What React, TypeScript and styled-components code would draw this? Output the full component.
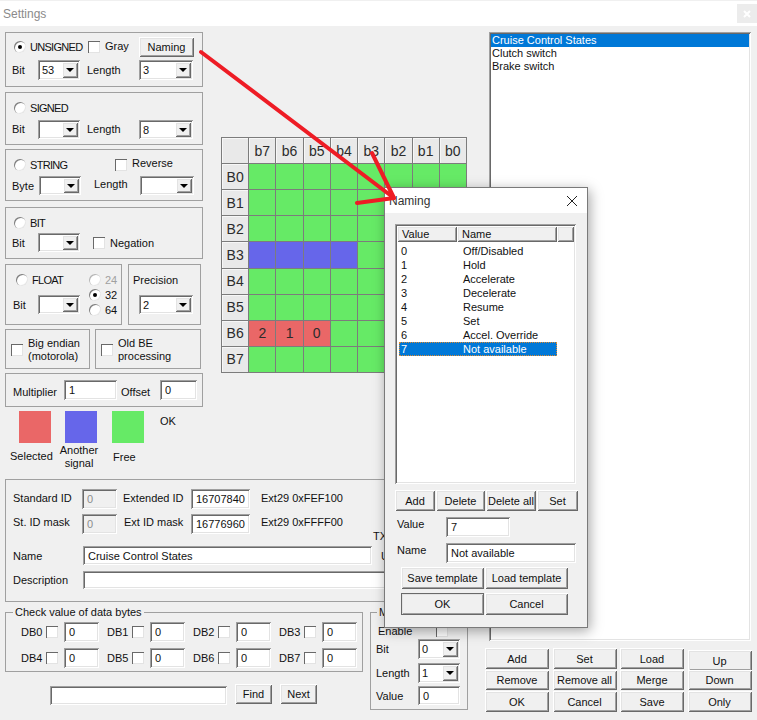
import React from 'react'
import styled, { createGlobalStyle, css } from 'styled-components'

const raised = css`
  box-shadow: inset 1px 1px 0 #ffffff, inset -1px -1px 0 #696969, inset 2px 2px 0 #e3e3e3,
    inset -2px -2px 0 #a0a0a0;
`

const sunken = css`
  box-shadow: inset 1px 1px 0 #a0a0a0, inset -1px -1px 0 #ffffff, inset 2px 2px 0 #696969,
    inset -2px -2px 0 #e3e3e3;
`

const GlobalStyle = createGlobalStyle`
  html, body { margin: 0; padding: 0; background: #f0f0f0; }
  * { box-sizing: border-box; }
  body { font-family: "Liberation Sans", Arial, sans-serif; font-size: 11px; color: #111; }
`

const Page = styled.div`
  position: relative;
  width: 757px;
  height: 720px;
  overflow: hidden;
  background: #f0f0f0;
`

const TitleBar = styled.div`
  height: 26px;
  display: flex;
  align-items: center;
  justify-content: space-between;
  background: #fff;
  border-top: 1px solid #f0f0f0;
  padding-left: 3px;
  font-size: 12px;
  color: #8a8a8a;
`

const CloseBox = styled.div`
  width: 20px;
  height: 19px;
  display: flex;
  align-items: center;
  justify-content: center;
  background: #ececec;
`

const Body = styled.div`
  display: flex;
  padding: 6px 5px 0;
`

const LeftArea = styled.div`
  width: 475px;
  display: flex;
  flex-direction: column;
`

const TopSection = styled.div`
  height: 447px;
  display: flex;
`

const LeftColumn = styled.div`
  width: 198px;
  display: flex;
  flex-direction: column;
`

const Panel = styled.div<{ $h: number; $w?: number; $mb?: number; $pt?: number; $pl?: number; $row?: boolean }>`
  height: ${p => p.$h}px;
  width: ${p => (p.$w ? `${p.$w}px` : '100%')};
  margin-bottom: ${p => p.$mb ?? 0}px;
  padding: ${p => p.$pt ?? 4}px 0 0 ${p => p.$pl ?? 6}px;
  border: 1px solid #a0a0a0;
  display: flex;
  flex-direction: ${p => (p.$row ? 'row' : 'column')};
  flex: none;
`

const PanelRow = styled.div<{ $mb?: number; $gap?: number }>`
  display: flex;
  margin-bottom: ${p => p.$mb ?? 0}px;
  gap: ${p => p.$gap ?? 0}px;
`

const Line = styled.div<{ $mb?: number; $h?: number }>`
  display: flex;
  align-items: center;
  height: ${p => p.$h ?? 20}px;
  margin-bottom: ${p => p.$mb ?? 0}px;
  flex: none;
`

const Label = styled.span<{ $w?: number; $ml?: number; $up?: number; $top?: number; $off?: boolean; $tight?: boolean }>`
  display: inline-block;
  flex: none;
  white-space: nowrap;
  width: ${p => (p.$w ? `${p.$w}px` : 'auto')};
  margin-left: ${p => p.$ml ?? 0}px;
  margin-bottom: ${p => p.$up ?? 0}px;
  margin-top: ${p => p.$top ?? 0}px;
  letter-spacing: ${p => (p.$tight ? '-0.7px' : 'normal')};
  color: ${p => (p.$off ? '#a0a0a0' : 'inherit')};
`

const RadioMark = styled.span<{ $on?: boolean; $ml?: number; $off?: boolean }>`
  width: 12px;
  height: 12px;
  flex: none;
  margin-left: ${p => p.$ml ?? 0}px;
  margin-right: 4px;
  border-radius: 50%;
  background: #fff;
  box-shadow: inset 1px 1px 0 ${p => (p.$off ? '#b4b4b4' : '#7d7d7d')}, inset -1px -1px 0 #e6e6e6;
  display: flex;
  align-items: center;
  justify-content: center;
  &::after {
    content: '';
    display: ${p => (p.$on ? 'block' : 'none')};
    width: 4px;
    height: 4px;
    border-radius: 50%;
    background: #000;
  }
`

const CheckMark = styled.span<{ $ml?: number; $mr?: number }>`
  width: 12px;
  height: 12px;
  flex: none;
  margin-left: ${p => p.$ml ?? 0}px;
  margin-right: ${p => p.$mr ?? 5}px;
  background: #fff;
  box-shadow: inset 1px 1px 0 #696969, inset -1px -1px 0 #e3e3e3;
`

const Button = styled.button<{ $w?: number; $h?: number; $ml?: number; $mt?: number; $strong?: boolean }>`
  width: ${p => (p.$w ? `${p.$w}px` : '100%')};
  height: ${p => p.$h ?? 21}px;
  margin-left: ${p => p.$ml ?? 0}px;
  margin-top: ${p => p.$mt ?? 0}px;
  flex: none;
  padding: 0;
  border: none;
  background: #f0f0f0;
  font: inherit;
  color: #111;
  ${raised}
  ${p =>
    p.$strong &&
    css`
      outline: 1px solid #696969;
      outline-offset: -1px;
    `}
`

const TextInput = styled.input<{ $w: number; $h?: number; $ml?: number; $off?: boolean; $mt?: number }>`
  width: ${p => p.$w}px;
  height: ${p => p.$h ?? 20}px;
  margin: ${p => p.$mt ?? 0}px 0 0 ${p => p.$ml ?? 0}px;
  flex: none;
  padding: 0 2px 0 5px;
  border: none;
  outline: none;
  font: inherit;
  color: ${p => (p.$off ? '#8c8c8c' : '#111')};
  background: ${p => (p.$off ? '#f0f0f0' : '#fff')};
  ${sunken}
`

const SelectBox = styled.div<{ $w: number; $h: number; $ml: number }>`
  width: ${p => p.$w}px;
  height: ${p => p.$h}px;
  margin-left: ${p => p.$ml}px;
  flex: none;
  display: flex;
  align-items: center;
  justify-content: space-between;
  padding: 2px 2px 2px 4px;
  background: #fff;
  ${sunken}
`

const SelectArrow = styled.span`
  width: 16px;
  height: 100%;
  flex: none;
  background: #f0f0f0;
  display: flex;
  align-items: center;
  justify-content: center;
  ${raised}
  &::after {
    content: '';
    border-style: solid;
    border-width: 4px 4px 0;
    border-color: #000 transparent transparent;
  }
`

const Dropdown: React.FC<{ w?: number; h?: number; ml?: number; value?: string }> = ({
  w = 42,
  h = 20,
  ml = 0,
  value = '',
}) => (
  <SelectBox $w={w} $h={h} $ml={ml}>
    <span>{value}</span>
    <SelectArrow />
  </SelectBox>
)

const Stacked = styled.div`
  display: flex;
  flex-direction: column;
`

const PrecisionTitle = styled.div`
  margin-bottom: 8px;
  height: 13px;
  line-height: 13px;
`

const TwoLines = styled.div`
  line-height: 13px;
`

const Legend = styled.div`
  display: flex;
  margin-top: 4px;
`

const LegendItem = styled.div<{ $w: number }>`
  width: ${p => p.$w}px;
  flex: none;
  display: flex;
  flex-direction: column;
`

const Swatch = styled.div<{ $color: string; $ml: number }>`
  width: 32px;
  height: 32px;
  margin-left: ${p => p.$ml}px;
  background: ${p => p.$color};
`

const Caption = styled.div<{ $ml: number; $mt: number; $w?: number }>`
  margin-left: ${p => p.$ml}px;
  margin-top: ${p => p.$mt}px;
  width: ${p => (p.$w ? `${p.$w}px` : 'auto')};
  line-height: 13px;
  text-align: center;
  white-space: nowrap;
`

const LegendOk = styled.div`
  margin-top: 4px;
`

const BitGrid = styled.div`
  width: 246px;
  height: 236px;
  margin: 105px 0 0 18px;
  flex: none;
  display: grid;
  grid-template-columns: repeat(9, 1fr);
  grid-template-rows: repeat(9, 1fr);
  gap: 1px;
  padding: 1px;
  background: #7c7c7c;
`

const HeadCell = styled.div`
  display: flex;
  align-items: center;
  justify-content: center;
  background: #e9e9e9;
  box-shadow: inset 1px 1px 0 #f7f7f7;
  font-size: 14px;
  color: #2c2c2c;
`

const BitCell = styled.div<{ $color: string }>`
  display: flex;
  align-items: center;
  justify-content: center;
  background: ${p => p.$color};
  font-size: 14px;
  color: #2c2c2c;
`

const IdPanel = styled.div`
  height: 123px;
  padding: 9px 0 0 7px;
  border: 1px solid #a0a0a0;
`

const TxLabel = styled.span`
  align-self: flex-end;
  margin: 0 0 -8px 30px;
`

const LowerRow = styled.div`
  display: flex;
  margin-top: 4px;
  gap: 7px;
`

const Fieldset = styled.fieldset<{ $w: number; $h: number; $pl: number; $pt: number }>`
  width: ${p => p.$w}px;
  height: ${p => p.$h}px;
  min-width: 0;
  flex: none;
  margin: 0;
  padding: ${p => p.$pt}px 0 0 ${p => p.$pl}px;
  border: 1px solid #a0a0a0;
`

const GroupTitle = styled.legend<{ $ml: number }>`
  margin-left: ${p => p.$ml}px;
  padding: 0 2px;
  line-height: 13px;
`

const CheckGrid = styled.div`
  display: grid;
  grid-template-columns: repeat(4, 86px);
  row-gap: 6px;
`

const CheckCell = styled.div`
  display: flex;
  align-items: center;
`

const SearchRow = styled.div`
  display: flex;
  margin-top: 12px;
  padding-left: 45px;
`

const RightColumn = styled.div`
  width: 267px;
  margin-left: 5px;
  display: flex;
  flex-direction: column;
`

const ListBox = styled.div`
  width: 262px;
  height: 609px;
  margin-left: 4px;
  padding: 2px;
  background: #fff;
  ${sunken}
`

const ListItem = styled.div<{ $active?: boolean }>`
  height: 13px;
  line-height: 13px;
  padding-left: 1px;
  background: ${p => (p.$active ? '#0078d7' : 'transparent')};
  color: ${p => (p.$active ? '#fff' : '#111')};
`

const ActionGrid = styled.div`
  display: grid;
  grid-template-columns: repeat(4, 64px);
  grid-template-rows: 21px 20px 21px;
  column-gap: 3.5px;
  row-gap: 1px;
  margin-top: 7px;
`

const Dialog = styled.div`
  position: absolute;
  left: 384px;
  top: 187px;
  width: 204px;
  height: 441px;
  border: 1px solid #7a7a7a;
  background: #f0f0f0;
  box-shadow: 2px 3px 12px rgba(0, 0, 0, 0.35);
`

const DialogTitle = styled.div`
  height: 25px;
  display: flex;
  align-items: center;
  justify-content: space-between;
  padding: 0 9px 0 4px;
  background: #fff;
  font-size: 12px;
  color: #333;
`

const DialogBody = styled.div`
  padding: 11px 0 0 10px;
`

const ListView = styled.div`
  width: 181px;
  height: 260px;
  padding: 2px;
  background: #fff;
  ${sunken}
`

const ListHeader = styled.div`
  display: grid;
  grid-template-columns: 60px 100px 1fr;
  height: 16px;
  margin-bottom: 2px;
`

const ListHeadCell = styled.div`
  display: flex;
  align-items: center;
  padding-left: 5px;
  background: #f0f0f0;
  ${raised}
`

const NameRow = styled.div<{ $active?: boolean }>`
  display: grid;
  grid-template-columns: 62px 1fr;
  width: 158px;
  height: 14px;
  line-height: 14px;
  margin-left: 2px;
  padding-left: 2px;
  background: ${p => (p.$active ? '#0078d7' : 'transparent')};
  color: ${p => (p.$active ? '#fff' : '#111')};
  outline: ${p => (p.$active ? '1px dotted #e08a2e' : 'none')};
  outline-offset: -1px;
`

const DialogRow = styled.div<{ $mt: number; $pl?: number; $gap?: number }>`
  display: flex;
  margin-top: ${p => p.$mt}px;
  padding-left: ${p => p.$pl ?? 0}px;
  gap: ${p => p.$gap ?? 0}px;
`

const ArrowLayer = styled.svg`
  position: absolute;
  left: 0;
  top: 0;
  pointer-events: none;
`

const COLORS = { free: '#66ea66', other: '#6666ea', sel: '#ea6767' }
const BITS = ['b7', 'b6', 'b5', 'b4', 'b3', 'b2', 'b1', 'b0']
const BYTES = ['B0', 'B1', 'B2', 'B3', 'B4', 'B5', 'B6', 'B7']

const cellInfo = (row: number, col: number) => {
  if (row === 3 && col < 4) return { color: COLORS.other, text: '' }
  if (row === 6 && col < 3) return { color: COLORS.sel, text: String(2 - col) }
  return { color: COLORS.free, text: '' }
}

const NAMES = [
  ['0', 'Off/Disabled'],
  ['1', 'Hold'],
  ['2', 'Accelerate'],
  ['3', 'Decelerate'],
  ['4', 'Resume'],
  ['5', 'Set'],
  ['6', 'Accel. Override'],
  ['7', 'Not available'],
]

const ACTIONS = [
  'Add', 'Set', 'Load', 'Up',
  'Remove', 'Remove all', 'Merge', 'Down',
  'OK', 'Cancel', 'Save', 'Only',
]

const App: React.FC = () => {
  return (
    <Page>
      <GlobalStyle />
      <TitleBar>
        Settings
        <CloseBox>
          <svg width="8" height="8" viewBox="0 0 8 8">
            <path d="M1 1l6 6M7 1L1 7" stroke="#fff" strokeWidth="2" />
          </svg>
        </CloseBox>
      </TitleBar>

      <Body>
        <LeftArea>
          <TopSection>
            <LeftColumn>
              <Panel $h={55} $mb={5}>
                <PanelRow $mb={3}>
                  <Line>
                    <RadioMark $on $ml={2} />
                    <Label $w={58} $tight>UNSIGNED</Label>
                    <CheckMark $mr={5} />
                    <Label $w={34} $up={2}>Gray</Label>
                    <Button $w={55} $h={20}>Naming</Button>
                  </Line>
                </PanelRow>
                <Line>
                  <Label $w={26}>Bit</Label>
                  <Dropdown value="53" />
                  <Label $w={52} $ml={7}>Length</Label>
                  <Dropdown w={54} value="3" />
                </Line>
              </Panel>

              <Panel $h={53} $mb={4} $pt={8}>
                <Line $h={13} $mb={6}>
                  <RadioMark $ml={2} />
                  <Label $tight>SIGNED</Label>
                </Line>
                <Line $h={19}>
                  <Label $w={26} $up={2}>Bit</Label>
                  <Dropdown h={19} />
                  <Label $w={52} $ml={7} $up={2}>Length</Label>
                  <Dropdown w={54} h={19} value="8" />
                </Line>
              </Panel>

              <Panel $h={52} $mb={6} $pt={8}>
                <Line $h={13} $mb={5}>
                  <RadioMark $ml={2} />
                  <Label $w={85} $tight>STRING</Label>
                  <CheckMark />
                  <Label $up={4}>Reverse</Label>
                </Line>
                <Line $h={19}>
                  <Label $w={27}>Byte</Label>
                  <Dropdown h={19} />
                  <Label $w={46} $ml={13} $up={3}>Length</Label>
                  <Dropdown w={54} h={19} />
                </Line>
              </Panel>

              <Panel $h={52} $mb={5} $pt={8}>
                <Line $h={13} $mb={4}>
                  <RadioMark $ml={2} />
                  <Label $tight>BIT</Label>
                </Line>
                <Line $h={19}>
                  <Label $w={26}>Bit</Label>
                  <Dropdown h={19} />
                  <CheckMark $ml={13} />
                  <Label>Negation</Label>
                </Line>
              </Panel>

              <PanelRow $mb={4} $gap={6}>
                <Panel $h={61} $w={117} $row $pt={8} $pl={7}>
                  <Stacked>
                    <Line $h={13} $mb={9}>
                      <RadioMark $ml={3} />
                      <Label $tight>FLOAT</Label>
                    </Line>
                    <Line $h={19}>
                      <Label $w={25}>Bit</Label>
                      <Dropdown h={19} />
                    </Line>
                  </Stacked>
                  <Stacked>
                    <Line $h={14} $mb={1}>
                      <RadioMark $off $ml={9} />
                      <Label $off>24</Label>
                    </Line>
                    <Line $h={14} $mb={1}>
                      <RadioMark $on $ml={9} />
                      <Label>32</Label>
                    </Line>
                    <Line $h={14}>
                      <RadioMark $ml={9} />
                      <Label>64</Label>
                    </Line>
                  </Stacked>
                </Panel>
                <Panel $h={61} $w={73} $pt={9} $pl={4}>
                  <PrecisionTitle>Precision</PrecisionTitle>
                  <Line $h={19}>
                    <Dropdown w={54} h={19} ml={6} value="2" />
                  </Line>
                </Panel>
              </PanelRow>

              <PanelRow $mb={4} $gap={5}>
                <Panel $h={40} $w={85} $pt={7} $pl={5}>
                  <Line $h={26}>
                    <CheckMark />
                    <TwoLines>
                      Big endian
                      <br />
                      (motorola)
                    </TwoLines>
                  </Line>
                </Panel>
                <Panel $h={40} $w={106} $pt={7} $pl={5}>
                  <Line $h={26}>
                    <CheckMark />
                    <TwoLines>
                      Old BE
                      <br />
                      processing
                    </TwoLines>
                  </Line>
                </Panel>
              </PanelRow>

              <Panel $h={34} $pt={6} $pl={7}>
                <Line>
                  <Label $w={51} $top={3}>Multiplier</Label>
                  <TextInput $w={53} readOnly defaultValue="1" />
                  <Label $w={39} $ml={4} $top={3}>Offset</Label>
                  <TextInput $w={37} readOnly defaultValue="0" />
                </Line>
              </Panel>

              <Legend>
                <LegendItem $w={60}>
                  <Swatch $color={COLORS.sel} $ml={14} />
                  <Caption $ml={5} $mt={7} $w={41}>Selected</Caption>
                </LegendItem>
                <LegendItem $w={47}>
                  <Swatch $color={COLORS.other} $ml={0} />
                  <Caption $ml={-8} $mt={1} $w={44}>
                    Another
                    <br />
                    signal
                  </Caption>
                </LegendItem>
                <LegendItem $w={48}>
                  <Swatch $color={COLORS.free} $ml={0} />
                  <Caption $ml={1} $mt={8} $w={20}>Free</Caption>
                </LegendItem>
                <LegendOk>OK</LegendOk>
              </Legend>
            </LeftColumn>

            <BitGrid>
              <HeadCell />
              {BITS.map(b => (
                <HeadCell key={b}>{b}</HeadCell>
              ))}
              {BYTES.map((name, row) => (
                <React.Fragment key={name}>
                  <HeadCell>{name}</HeadCell>
                  {BITS.map((b, col) => {
                    const info = cellInfo(row, col)
                    return (
                      <BitCell key={b} $color={info.color}>
                        {info.text}
                      </BitCell>
                    )
                  })}
                </React.Fragment>
              ))}
            </BitGrid>
          </TopSection>

          <IdPanel>
            <Line $mb={5}>
              <Label $w={69} $up={2}>Standard ID</Label>
              <TextInput $w={35} $off readOnly defaultValue="0" />
              <Label $w={68} $ml={6} $up={2}>Extended ID</Label>
              <TextInput $w={59} readOnly defaultValue="16707840" />
              <Label $ml={11} $up={2}>Ext29 0xFEF100</Label>
            </Line>
            <Line $mb={12}>
              <Label $w={69} $up={4}>St. ID mask</Label>
              <TextInput $w={35} $off readOnly defaultValue="0" />
              <Label $w={67} $ml={7} $up={4}>Ext ID mask</Label>
              <TextInput $w={59} readOnly defaultValue="16776960" />
              <Label $ml={11} $up={4}>Ext29 0xFFFF00</Label>
              <TxLabel>TX</TxLabel>
            </Line>
            <Line $h={19} $mb={6}>
              <Label $w={70}>Name</Label>
              <TextInput $w={289} $h={19} readOnly defaultValue="Cruise Control States" />
              <Label $ml={9}>U</Label>
            </Line>
            <Line $h={18}>
              <Label $w={70}>Description</Label>
              <TextInput $w={380} $h={18} readOnly />
            </Line>
          </IdPanel>

          <LowerRow>
            <Stacked>
              <Fieldset $w={358} $h={66} $pl={15} $pt={3}>
                <GroupTitle $ml={-8}>Check value of data bytes</GroupTitle>
                <CheckGrid>
                  {[0, 1, 2, 3, 4, 5, 6, 7].map(i => (
                    <CheckCell key={i}>
                      <Label $w={25}>DB{i}</Label>
                      <CheckMark $mr={6} />
                      <TextInput $w={35} readOnly defaultValue="0" />
                    </CheckCell>
                  ))}
                </CheckGrid>
              </Fieldset>
              <SearchRow>
                <TextInput $w={177} $h={19} $mt={2} readOnly />
                <Button $w={37} $h={20} $ml={8}>Find</Button>
                <Button $w={37} $h={20} $ml={8}>Next</Button>
              </SearchRow>
            </Stacked>
            <Fieldset $w={98} $h={104} $pl={5} $pt={5}>
              <GroupTitle $ml={1}>Mux</GroupTitle>
              <Line $h={13} $mb={2}>
                <Label $w={58} $ml={2}>Enable</Label>
                <CheckMark />
              </Line>
              <Line $mb={4}>
                <Label $w={42}>Bit</Label>
                <Dropdown value="0" />
              </Line>
              <Line $mb={3}>
                <Label $w={42}>Length</Label>
                <Dropdown value="1" />
              </Line>
              <Line $h={19}>
                <Label $w={42}>Value</Label>
                <TextInput $w={42} $h={19} readOnly defaultValue="0" />
              </Line>
            </Fieldset>
          </LowerRow>
        </LeftArea>

        <RightColumn>
          <ListBox>
            <ListItem $active>Cruise Control States</ListItem>
            <ListItem>Clutch switch</ListItem>
            <ListItem>Brake switch</ListItem>
          </ListBox>
          <ActionGrid>
            {ACTIONS.map((a, i) => (
              <Button key={a} $h={i >= 4 && i < 8 ? 20 : 21} $mt={a === 'Up' ? 2 : 0}>
                {a}
              </Button>
            ))}
          </ActionGrid>
        </RightColumn>
      </Body>

      <Dialog>
        <DialogTitle>
          Naming
          <svg width="12" height="12" viewBox="0 0 12 12">
            <path d="M1 1l10 10M11 1L1 11" stroke="#222" strokeWidth="1" fill="none" />
          </svg>
        </DialogTitle>
        <DialogBody>
          <ListView>
            <ListHeader>
              <ListHeadCell>Value</ListHeadCell>
              <ListHeadCell>Name</ListHeadCell>
              <ListHeadCell />
            </ListHeader>
            {NAMES.map(([value, name], i) => (
              <NameRow key={value} $active={i === 7}>
                <span>{value}</span>
                <span>{name}</span>
              </NameRow>
            ))}
          </ListView>
          <DialogRow $mt={6} $gap={1}>
            <Button $w={40}>Add</Button>
            <Button $w={49}>Delete</Button>
            <Button $w={50}>Delete all</Button>
            <Button $w={41}>Set</Button>
          </DialogRow>
          <DialogRow $mt={6} $pl={2}>
            <Label $w={49} $top={1}>Value</Label>
            <TextInput $w={64} readOnly defaultValue="7" />
          </DialogRow>
          <DialogRow $mt={6} $pl={2}>
            <Label $w={49} $top={1}>Name</Label>
            <TextInput $w={130} readOnly defaultValue="Not available" />
          </DialogRow>
          <DialogRow $mt={4} $pl={6} $gap={1}>
            <Button $w={83} $h={22}>Save template</Button>
            <Button $w={83} $h={22}>Load template</Button>
          </DialogRow>
          <DialogRow $mt={4} $pl={6} $gap={1}>
            <Button $w={83} $h={22} $strong>OK</Button>
            <Button $w={83} $h={22}>Cancel</Button>
          </DialogRow>
        </DialogBody>
      </Dialog>

      <ArrowLayer width="757" height="720" viewBox="0 0 757 720">
        <path
          d="M201 52L394 198M372 153L394 198M357 203L394 198"
          stroke="#ee1c25"
          strokeWidth="4"
          fill="none"
          strokeLinecap="round"
        />
      </ArrowLayer>
    </Page>
  )
}

export default App
